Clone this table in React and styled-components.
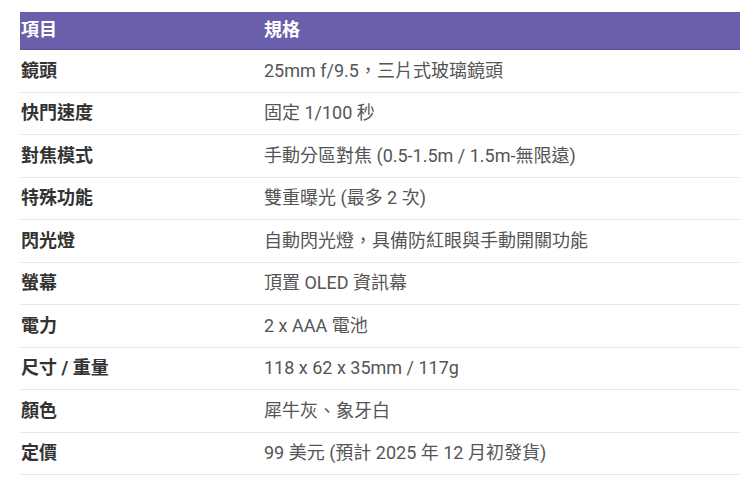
import React from "react";
import styled, { createGlobalStyle } from "styled-components";

const GlobalStyle = createGlobalStyle`
  html, body {
    margin: 0;
    padding: 0;
    background: #ffffff;
    overflow: hidden;
  }
  body {
    font-family: Roboto, "Noto Sans CJK TC", "Noto Sans", sans-serif;
  }
`;

const Page = styled.div`
  padding: 12px 0 0 20px;
  width: 740px;
  box-sizing: border-box;
  overflow: hidden;
`;

const Table = styled.table`
  width: 740px;
  border-collapse: collapse;
  font-size: 18px;
  line-height: 28px;
`;

const HeadRow = styled.tr`
  background: #6a5fab;
  border-bottom: 1px solid #5a4f9c;
`;

const HeadCell = styled.th`
  text-align: left;
  color: #ffffff;
  font-weight: 700;
  padding: 4px 1px 5px;
  width: ${(p) => p.$width || "auto"};
`;

const Row = styled.tr`
  border-bottom: 1px solid #e6e6e6;
`;

const Label = styled.td`
  color: #333333;
  font-weight: 700;
  padding: 6.75px 1px;
  width: 241px;
`;

const Value = styled.td`
  color: #555555;
  padding: 6.75px 1px;
`;

const specs = [
  ["鏡頭", "25mm f/9.5，三片式玻璃鏡頭"],
  ["快門速度", "固定 1/100 秒"],
  ["對焦模式", "手動分區對焦 (0.5-1.5m / 1.5m-無限遠)"],
  ["特殊功能", "雙重曝光 (最多 2 次)"],
  ["閃光燈", "自動閃光燈，具備防紅眼與手動開關功能"],
  ["螢幕", "頂置 OLED 資訊幕"],
  ["電力", "2 x AAA 電池"],
  ["尺寸 / 重量", "118 x 62 x 35mm / 117g"],
  ["顏色", "犀牛灰、象牙白"],
  ["定價", "99 美元 (預計 2025 年 12 月初發貨)"],
];

export default function App() {
  return (
    <>
      <GlobalStyle />
      <Page>
        <Table>
          <thead>
            <HeadRow>
              <HeadCell $width="241px">項目</HeadCell>
              <HeadCell>規格</HeadCell>
            </HeadRow>
          </thead>
          <tbody>
            {specs.map(([label, value]) => (
              <Row key={label}>
                <Label>{label}</Label>
                <Value>{value}</Value>
              </Row>
            ))}
          </tbody>
        </Table>
      </Page>
    </>
  );
}
